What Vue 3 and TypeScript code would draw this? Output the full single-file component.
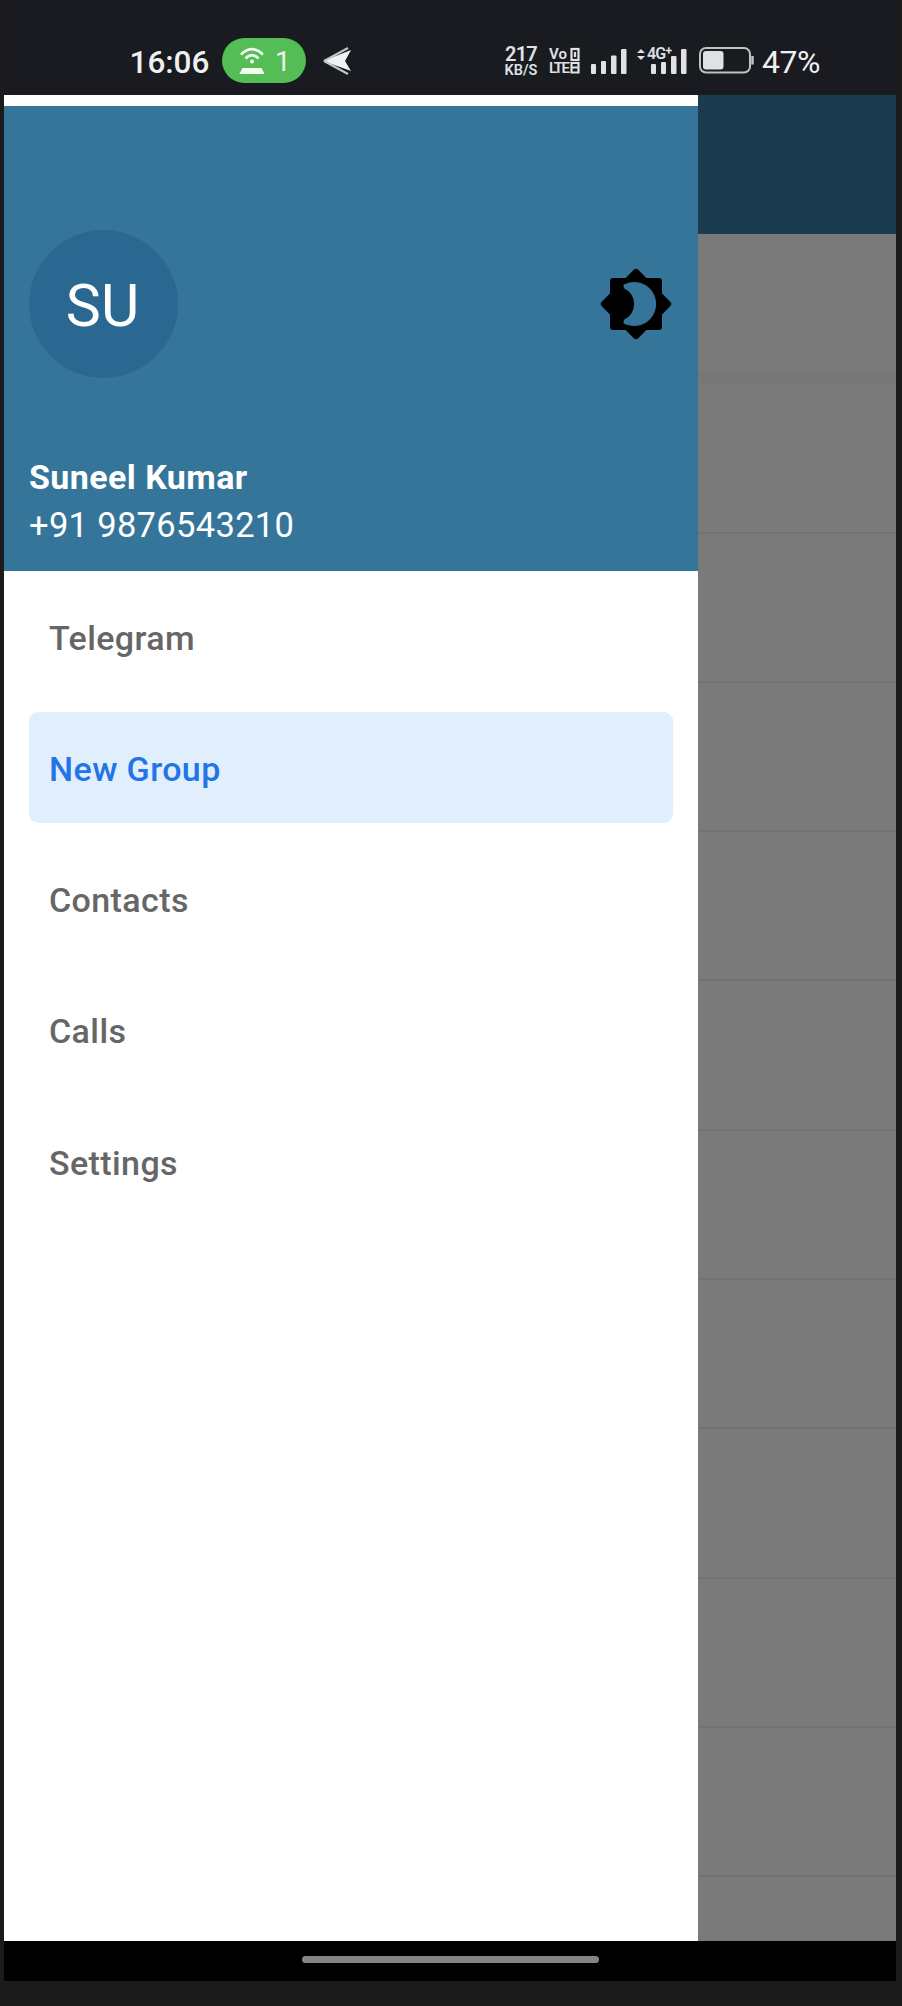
<script setup lang="ts">
import { ref } from 'vue'

interface User {
  initials: string
  name: string
  phone: string
}

const user: User = { initials: 'SU', name: 'Suneel Kumar', phone: '+91 9876543210' }
const menu: string[] = ['Telegram', 'New Group', 'Contacts', 'Calls', 'Settings']
const active = ref<string>('New Group')
const chatRows = 12
</script>

<template>
  <div class="stage">
    <div class="phone">
      <header class="status">
        <span class="clock">16:06</span>
        <span class="hotspot">
          <svg width="26" height="28" viewBox="0 0 26 28">
            <g fill="none" stroke="#f4fff2" stroke-width="2.6">
              <path d="M2 7.5Q13-3.2 24 7.5" />
              <path d="M6.5 11.5Q13 4.8 19.500 11.500" />
            </g>
            <circle cx="13" cy="14.500" r="2" fill="#f4fff2" />
            <path d="M3.500 21H22.500L25.500 27H.5Z" fill="#f4fff2" />
          </svg>
          <span class="count">1</span>
        </span>
        <svg class="arrow" width="30" height="28" viewBox="0 0 30 28">
          <path d="M0 14L28 3 22 14 28 24Z" fill="#f0f2f3" />
          <path d="M1 14L25 1M1 14L25 27" stroke="#c5c8ca" stroke-width="2" />
        </svg>
        <span class="spacer"></span>
        <span class="speed"><b>217</b><i>KB/S</i></span>
        <span class="volte">
          <span class="volte-text"><b>Vo</b><b>LTE</b></span>
          <svg width="10" height="28" viewBox="0 0 10 28">
            <g fill="none" stroke="#dfe1e3" stroke-width="2.2">
              <rect x="1.500" y="2" width="7" height="11" />
              <path d="M5 5V10M1.500 16H8.500V25.500H1.500ZM1.500 20.500H8.500" />
            </g>
          </svg>
        </span>
        <svg class="signal" width="38" height="28" viewBox="0 0 38 28">
          <g fill="#dfe1e3">
            <rect x="0" y="17" width="5" height="10" rx="1" />
            <rect x="10" y="14" width="5" height="13" rx="1" />
            <rect x="20" y="8.500" width="5.500" height="18.500" rx="1" />
            <rect x="30" y="2" width="5.500" height="25" rx="1" />
          </g>
        </svg>
        <span class="mobile">
          <svg width="54" height="28" viewBox="0 0 54 28">
            <g fill="#dfe1e3">
              <path d="M1 6L5 2 9 6ZM1 9H9L5 13Z" />
              <rect x="15" y="17" width="5" height="10" rx="1" />
              <rect x="25" y="15" width="5" height="12" rx="1" />
              <rect x="35" y="9" width="5.500" height="18" rx="1" />
              <rect x="45" y="2" width="5.500" height="25" rx="1" />
            </g>
          </svg>
          <span class="network">4G<sup>+</sup></span>
        </span>
        <svg class="battery" width="56" height="27" viewBox="0 0 56 27">
          <rect x="1" y="1" width="50" height="24.500" rx="6" fill="none" stroke="#bfc2c4" stroke-width="2" />
          <rect x="4" y="4" width="20.500" height="18.500" rx="3" fill="#dfe1e3" />
          <path d="M53.500 9V17.500" stroke="#bfc2c4" stroke-width="2.500" />
        </svg>
        <span class="percent">47%</span>
      </header>

      <main class="screen">
        <aside class="drawer">
          <section class="profile">
            <div class="profile-top">
              <div class="avatar"><span>{{ user.initials }}</span></div>
              <svg class="theme" width="76" height="76" viewBox="0 0 24 24">
                <path
                  d="M19.200 9.100V4.800H14.900L12 1.900 9.100 4.800H4.800V9.100L1.900 12 4.800 14.900V19.200H9.100L12 22.100 14.900 19.200H19.200V14.900L22.100 12Z"
                  fill="#000"
                  stroke="#000"
                  stroke-width="2"
                  stroke-linejoin="round"
                />
                <path d="M8 5.940A6.950 6.950 0 1 1 8 18.060L8.200 17A5.500 5.500 0 0 0 8.200 7Z" fill="#36759a" />
              </svg>
            </div>
            <div class="name">{{ user.name }}</div>
            <div class="number">{{ user.phone }}</div>
          </section>
          <nav class="menu">
            <a
              v-for="item in menu"
              :key="item"
              class="item"
              :class="{ active: item === active }"
              @click="active = item"
            >{{ item }}</a>
          </nav>
        </aside>
        <div class="backdrop">
          <div class="toolbar"></div>
          <div class="rows">
            <div v-for="n in chatRows" :key="n" class="row"></div>
          </div>
        </div>
      </main>

      <footer class="gesture"><span></span></footer>
    </div>
  </div>
</template>

<style>
body {
  margin: 0;
  background: #1b1b1b;
}
</style>

<style scoped>
.stage {
  width: 902px;
  height: 2006px;
  box-sizing: border-box;
  padding: 0 6px 25px 4px;
  background: #1b1b1b;
  font-family: Roboto, sans-serif;
  overflow: hidden;
}
.phone {
  height: 1981px;
  display: flex;
  flex-direction: column;
}
.status {
  height: 95px;
  box-sizing: border-box;
  padding: 26px 75px 0 125.500px;
  background: #191b20;
  color: #eef0f2;
  display: flex;
  align-items: center;
  flex: none;
}
.clock {
  width: 80px;
  font-size: 31.500px;
  font-weight: 500;
  line-height: 40px;
  white-space: nowrap;
  padding-top: 4px;
}
.hotspot {
  width: 84px;
  height: 45px;
  margin-left: 12.500px;
  box-sizing: border-box;
  border-radius: 23px;
  background: #55bd55;
  display: flex;
  align-items: center;
  padding-left: 17px;
}
.count {
  font-size: 28px;
  line-height: 40px;
  margin-left: 10px;
  padding-top: 3px;
}
.arrow {
  margin-left: 17px;
}
.spacer {
  flex: 1;
}
.speed {
  width: 36px;
  display: flex;
  flex-direction: column;
  align-items: center;
  color: #dfe1e3;
  margin-right: 10px;
  padding-top: 3px;
}
.speed b {
  font-size: 20px;
  line-height: 17px;
  font-weight: 600;
  letter-spacing: -0.8px;
}
.speed i {
  font-size: 14.500px;
  line-height: 15px;
  font-style: normal;
  font-weight: 600;
}
.volte {
  display: flex;
  width: 31px;
  margin-right: 11px;
  justify-content: space-between;
}
.volte-text {
  display: flex;
  flex-direction: column;
  color: #dfe1e3;
}
.volte-text b {
  font-size: 15px;
  line-height: 14px;
  font-weight: 600;
  letter-spacing: -1.600px;
}
.volte-text b:first-child {
  letter-spacing: 0;
}
.mobile {
  position: relative;
  width: 54px;
  height: 28px;
  margin-left: 7px;
}
.network {
  position: absolute;
  left: 11px;
  top: -1px;
  font-size: 16px;
  line-height: 16px;
  font-weight: 600;
  letter-spacing: -0.8px;
  color: #dfe1e3;
  white-space: nowrap;
}
.network sup {
  font-size: 12px;
  line-height: 8px;
  vertical-align: 4px;
}
.battery {
  margin-left: 9px;
}
.percent {
  width: 59px;
  margin-left: 7px;
  font-size: 32px;
  line-height: 40px;
  padding-top: 2px;
  letter-spacing: -0.5px;
}
.screen {
  flex: 1;
  min-height: 0;
  display: flex;
}
.drawer {
  width: 693.500px;
  flex: none;
  background: #fff;
  padding-top: 11px;
  box-sizing: border-box;
}
.profile {
  height: 464.500px;
  box-sizing: border-box;
  padding: 124px 24px 0 25px;
  background: #36759a;
  color: #fff;
}
.profile-top {
  height: 148px;
  display: flex;
  align-items: center;
  justify-content: space-between;
}
.avatar {
  width: 149px;
  height: 148px;
  border-radius: 50%;
  background: #2a6892;
  display: flex;
  align-items: center;
  justify-content: center;
  font-size: 59px;
}
.avatar span {
  padding-top: 3px;
  margin-left: -2px;
}
.name {
  margin-top: 77px;
  font-size: 34px;
  line-height: 44px;
  font-weight: 700;
  letter-spacing: 0.420px;
}
.number {
  margin-top: 4px;
  font-size: 34.500px;
  line-height: 44px;
  letter-spacing: 0.320px;
}
.menu {
  display: flex;
  flex-direction: column;
  gap: 20.300px;
  padding: 10.500px 25px 0;
}
.item {
  height: 111px;
  border-radius: 9px;
  padding-left: 20px;
  display: flex;
  align-items: center;
  font-size: 34px;
  font-weight: 500;
  letter-spacing: 0.400px;
  color: #666;
  padding-top: 2px;
  box-sizing: border-box;
}
.item.active {
  background: #e1eefb;
  color: #2474e8;
}
.backdrop {
  flex: 1;
  background: #7a7a7a;
  display: flex;
  flex-direction: column;
  overflow: hidden;
}
.toolbar {
  height: 139px;
  background: #1b3b4e;
  flex: none;
}
.rows {
  flex: 1;
  min-height: 0;
  overflow: hidden;
  padding-top: 1px;
}
.row {
  height: 149.300px;
  box-sizing: border-box;
  border-bottom: 2px solid #727272;
}
.row:first-child {
  border-bottom: 14px solid #777;
}
.gesture {
  height: 40px;
  flex: none;
  background: #000;
  display: flex;
  justify-content: center;
  align-items: center;
}
.gesture span {
  width: 297px;
  height: 7px;
  border-radius: 4px;
  background: #858585;
  margin-top: -3px;
}
</style>
